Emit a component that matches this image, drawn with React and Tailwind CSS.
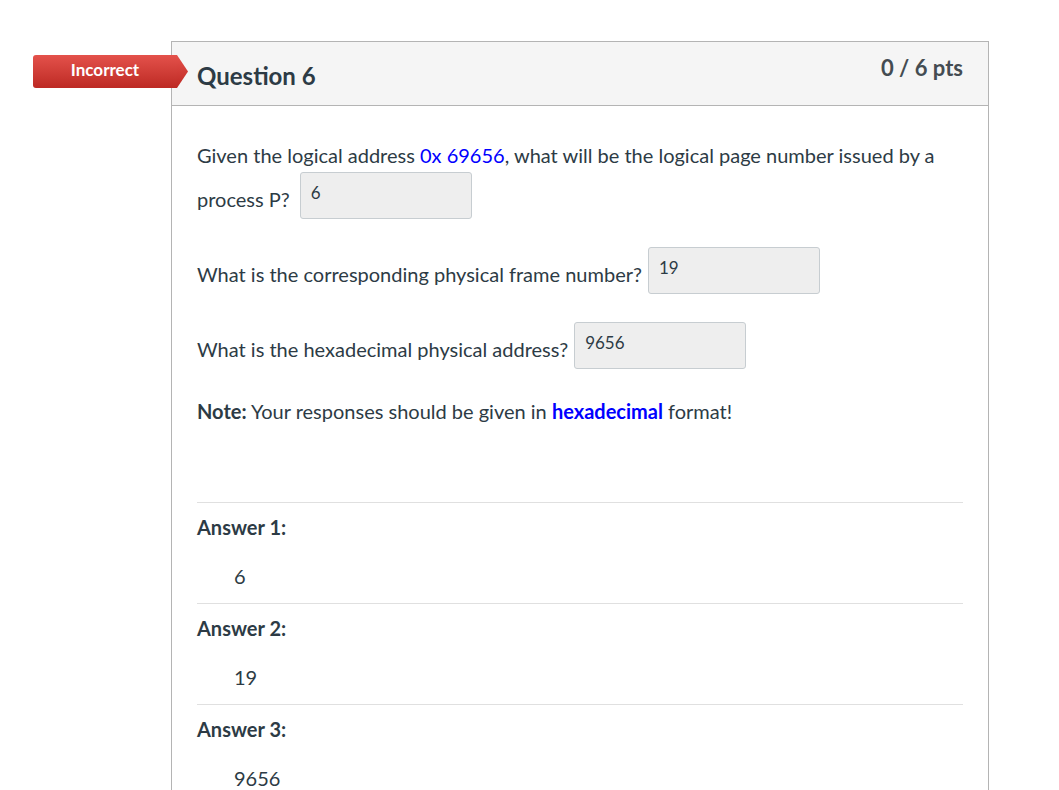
import React from 'react'

const font = { fontFamily: 'Lato, "Open Sans", sans-serif' }

function Blank({ value, width = 'w-[172px]' }) {
  return (
    <div
      className={`${width} h-[47px] shrink-0 rounded-[3px] border border-[#c7cdd1] bg-[#eeeeee] px-[10px] pt-[10px] text-[17px] leading-[20px] text-[#2d3b45]`}
    >
      {value}
    </div>
  )
}

function Row({ label, value }) {
  return (
    <div className="flex items-start gap-[6px]">
      <span className="mt-[13px] leading-[28px]">{label}</span>
      <Blank value={value} />
    </div>
  )
}

const answers = [
  { label: 'Answer 1:', value: '6' },
  { label: 'Answer 2:', value: '19' },
  { label: 'Answer 3:', value: '9656' },
]

export default function App() {
  return (
    <div className="min-h-[790px] bg-white pt-[41px]" style={font}>
      <div className="relative ml-[171px] w-[818px] border border-b-0 border-[#b4b4b4]">
        <div className="absolute left-[-139px] top-[13px] flex h-[33px] w-[155px] items-center">
          <div className="flex h-full w-[144px] items-center justify-center rounded-l-[3px] bg-gradient-to-b from-[#e4514b] to-[#bd2923] pb-[3px] text-[17px] font-bold text-white">
            Incorrect
          </div>
          <svg width="11" height="33" viewBox="0 0 11 33" className="shrink-0">
            <defs>
              <linearGradient id="arrow" x1="0" y1="0" x2="0" y2="1">
                <stop offset="0" stopColor="#e4514b" />
                <stop offset="1" stopColor="#bd2923" />
              </linearGradient>
            </defs>
            <polygon points="0,0 11,16.5 0,33" fill="url(#arrow)" />
          </svg>
        </div>

        <div className="flex h-[64px] items-start justify-between border-b border-[#b4b4b4] bg-[#f5f5f5] pl-[25px] pr-[25px]">
          <h2 className="pt-[19px] text-[24px] font-bold leading-[30px] text-[#2d3b45]">Question 6</h2>
          <div className="pt-[11px] text-[22px] font-bold leading-[30px] text-[#444c52]">0 / 6 pts</div>
        </div>

        <div className="px-[25px] pt-[35px] text-[20px] text-[#2d3b45]">
          <p className="leading-[28px]">
            Given the logical address <span className="text-[#0000ff]">0x 69656</span>, what will be the
            logical page number issued by a
          </p>
          <div className="mt-[3px]">
            <div className="flex items-start gap-[10px]">
              <span className="mt-[13px] leading-[28px]">process P?</span>
              <Blank value="6" />
            </div>
          </div>
          <div className="mt-[28px]">
            <Row label="What is the corresponding physical frame number?" value="19" />
          </div>
          <div className="mt-[28px]">
            <Row label="What is the hexadecimal physical address?" value="9656" />
          </div>
          <p className="mt-[28px] leading-[28px]">
            <span className="font-bold">Note:</span> Your responses should be given in{' '}
            <span className="font-bold text-[#0000ff]">hexadecimal</span> format!
          </p>

          <div className="mt-[77px]">
            {answers.map((a) => (
              <div key={a.label} className="border-t border-[#e0e0e0] pt-[10px] pb-[13px]">
                <div className="font-bold leading-[28px]">{a.label}</div>
                <div className="mt-[21px] pl-[37px] leading-[28px]">{a.value}</div>
              </div>
            ))}
          </div>
        </div>
      </div>
    </div>
  )
}
